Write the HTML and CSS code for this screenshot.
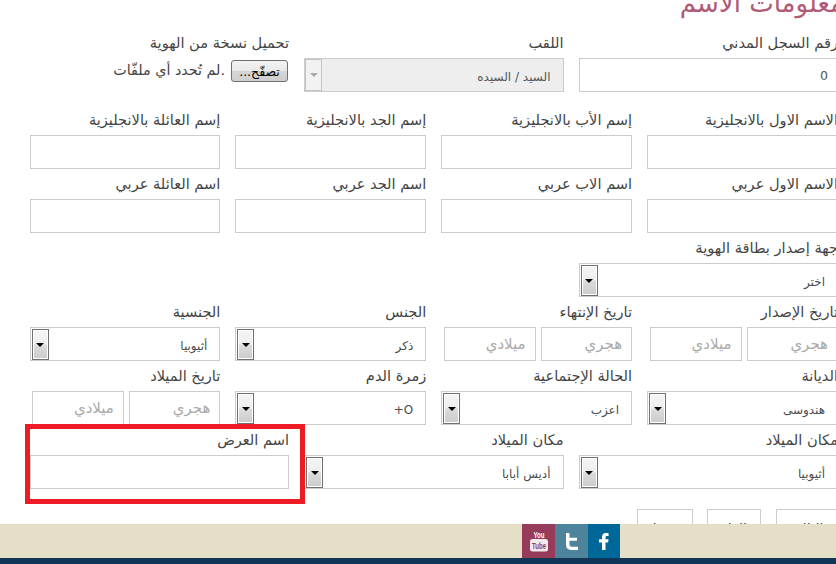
FILE: index.html
```html
<!DOCTYPE html>
<html lang="ar" dir="rtl">
<head>
<meta charset="utf-8">
<title>معلومات الاسم</title>
<link rel="stylesheet" href="styles.css">
</head>
<body>
<main class="page">
  <h1 class="title">معلومات الاسم</h1>
  <div class="row row3 first">
    <div class="field"><label>رقم السجل المدني</label><input class="ctl" type="text" value="0"></div>
    <div class="field"><label>اللقب</label>
      <div class="sel disabled"><span class="val">السيد / السيده</span><span class="btn"><i></i></span></div></div>
    <div class="field"><label>تحميل نسخة من الهوية</label>
      <div class="file"><button class="browse" type="button">تصفّح...</button><span>.لم تُحدد أي ملفّات</span></div></div>
  </div>
  <div class="row row4">
    <div class="field"><label>الاسم الاول بالانجليزية</label><input class="ctl" type="text"></div>
    <div class="field"><label>إسم الأب بالانجليزية</label><input class="ctl" type="text"></div>
    <div class="field"><label>إسم الجد بالانجليزية</label><input class="ctl" type="text"></div>
    <div class="field"><label>إسم العائلة بالانجليزية</label><input class="ctl" type="text"></div>
  </div>
  <div class="row row4">
    <div class="field"><label>الاسم الاول عربي</label><input class="ctl" type="text"></div>
    <div class="field"><label>اسم الاب عربي</label><input class="ctl" type="text"></div>
    <div class="field"><label>اسم الجد عربي</label><input class="ctl" type="text"></div>
    <div class="field"><label>اسم العائلة عربي</label><input class="ctl" type="text"></div>
  </div>
  <div class="row row3">
    <div class="field"><label>جهة إصدار بطاقة الهوية</label>
      <div class="sel"><span class="val">اختر</span><span class="btn"><i></i></span></div></div>
  </div>
  <div class="row row4">
    <div class="field"><label>تاريخ الإصدار</label>
      <div class="dates"><input class="ctl" type="text" placeholder="هجري"><input class="ctl" type="text" placeholder="ميلادي"></div></div>
    <div class="field"><label>تاريخ الإنتهاء</label>
      <div class="dates"><input class="ctl" type="text" placeholder="هجري"><input class="ctl" type="text" placeholder="ميلادي"></div></div>
    <div class="field"><label>الجنس</label>
      <div class="sel"><span class="val">ذكر</span><span class="btn"><i></i></span></div></div>
    <div class="field"><label>الجنسية</label>
      <div class="sel"><span class="val">أثيوبيا</span><span class="btn"><i></i></span></div></div>
  </div>
  <div class="row row4">
    <div class="field"><label>الديانة</label>
      <div class="sel"><span class="val">هندوسى</span><span class="btn"><i></i></span></div></div>
    <div class="field"><label>الحالة الإجتماعية</label>
      <div class="sel"><span class="val">اعزب</span><span class="btn"><i></i></span></div></div>
    <div class="field"><label>زمرة الدم</label>
      <div class="sel"><span class="val">O+</span><span class="btn"><i></i></span></div></div>
    <div class="field"><label>تاريخ الميلاد</label>
      <div class="dates"><input class="ctl" type="text" placeholder="هجري"><input class="ctl" type="text" placeholder="ميلادي"></div></div>
  </div>
  <div class="row row3">
    <div class="field"><label>مكان الميلاد</label>
      <div class="sel"><span class="val">أثيوبيا</span><span class="btn"><i></i></span></div></div>
    <div class="field"><label>مكان الميلاد</label>
      <div class="sel"><span class="val">أديس أبابا</span><span class="btn"><i></i></span></div></div>
    <div class="field"><label>اسم العرض</label><input class="ctl" type="text"></div>
  </div>
  <div class="actions">
    <button class="act act-next" type="button">التالي</button>
    <button class="act act-back" type="button">إلغاء</button>
    <button class="act act-save" type="button">حفظ</button>
  </div>
</main>
<div class="highlight"></div>
<footer class="footer">
  <div class="social">
    <a class="soc fb" href="#" aria-label="Facebook">
      <svg width="10" height="17" viewBox="0 0 10 17"><path fill="#fff" d="M3 17V9.500H0V6.300H3V4C3 1.400 4.500 0 7 0c1.200 0 2.300.1 2.600.2v2.900H8c-1.200 0-1.500.6-1.500 1.500v1.700h3l-.4 3.200H6.500V17z"/></svg>
    </a>
    <a class="soc tw" href="#" aria-label="Twitter">
      <svg width="12" height="17" viewBox="0 0 12 17"><path fill="#fff" d="M0 0h3.500v4.800H11v3H3.500v3.400c0 1.600.7 2.500 2.200 2.500H12V17H5C1.800 17 0 15 0 11.800z"/></svg>
    </a>
    <a class="soc yt" href="#" aria-label="YouTube">
      <svg width="18" height="22" viewBox="0 0 18 22">
        <text class="yt-you" x="9" y="8" text-anchor="middle" textLength="11" lengthAdjust="spacingAndGlyphs">You</text>
        <rect x="0" y="9" width="18" height="12.500" rx="2.500" fill="#f4e9ec"/>
        <text class="yt-tube" x="9" y="19" text-anchor="middle" textLength="14" lengthAdjust="spacingAndGlyphs">Tube</text>
      </svg>
    </a>
  </div>
</footer>
</body>
</html>
```

FILE: styles.css
```css
* { box-sizing: border-box; }
html, body { margin: 0; height: 564px; overflow: hidden; background: #fff; }
body { position: relative; width: 836px; font-family: "DejaVu Sans", sans-serif; color: #444; font-size: 13px; }

.page { width: 808.500px; margin-right: -2px; }

.title {
  margin: -17px -6px 0 0;
  height: 45px;
  font-size: 26px;
  line-height: 40px;
  font-weight: normal;
  color: #b05a75;
  white-space: nowrap;
}

.row { display: grid; column-gap: 15px; }
.row3 { grid-template-columns: repeat(3, 1fr); }
.row4 { grid-template-columns: repeat(4, 1fr); }
.row.first { margin-bottom: 13px; }

.field { min-width: 0; }
.field label {
  display: block;
  height: 30px;
  padding-top: 6px;
  font-size: 14.600px;
  line-height: 18px;
  color: #444;
  white-space: nowrap;
}

.ctl {
  display: block;
  width: 100%;
  height: 34px;
  padding: 0 9px;
  border: 1px solid #ccc;
  border-radius: 0;
  background: #fff;
  font-family: inherit;
  font-size: 12.500px;
  color: #555;
  text-align: right;
  outline: 0;
}
.ctl::placeholder { color: #aaa; font-size: 15px; opacity: 1; }

.dates { display: flex; gap: 5px; }
.dates .ctl { width: 91.500px; flex: none; }

.sel {
  position: relative;
  display: flex;
  align-items: center;
  height: 34px;
  padding: 0 12px;
  border: 1px solid #ccc;
  background: #fff;
  font-size: 12px;
  color: #4c4c4c;
}
.sel .val { padding-top: 3px; }
.sel .btn {
  position: absolute;
  left: 1px;
  top: 1px;
  bottom: 0;
  width: 17px;
  border: 1px solid #707070;
  box-shadow: inset 0 0 0 1px #fff;
  background: linear-gradient(#f5f5f5 0, #eeeeee 48%, #dcdcdc 52%, #cbcbcb 100%);
}
.sel .btn i {
  position: absolute;
  left: 3.500px;
  top: 13px;
  width: 0;
  height: 0;
  border-style: solid;
  border-width: 4px 4px 0;
  border-color: #000 transparent transparent;
}
.sel.disabled { background: #eee; border-color: #ccc; color: #555; }
.sel.disabled .btn { border-color: #c4c4c4; background: #f2f2f2; top: 0; bottom: 0; left: 0; box-shadow: none; }
.sel.disabled .btn i { border-top-color: #aaa; }

.file { display: flex; align-items: flex-start; gap: 6px; padding-top: 2px; font-size: 14.300px; color: #444; }
.file span { padding-top: 2px; white-space: nowrap; }
.browse {
  width: 57px;
  height: 22px;
  margin-right: 1px;
  padding: 0;
  border: 1px solid #707070;
  border-radius: 3px;
  background: linear-gradient(#f3f3f3, #e9e9e9 48%, #d6d6d6 52%, #cfcfcf);
  font-family: inherit;
  font-size: 12.500px;
  color: #000;
}

.actions { display: flex; gap: 15px; margin-top: 20px; }
.act {
  height: 34px;
  padding: 6px 0 0;
  border: 1px solid #ccc;
  background: #fff;
  font-family: inherit;
  font-size: 14px;
  color: #1c3f66;
}
.act-next { width: 62px; }
.act-back { width: 54px; margin-left: -1px; }
.act-save { width: 56px; }

/* annotation drawn over the form */
.highlight {
  position: absolute;
  left: 25px;
  top: 424px;
  width: 280px;
  height: 80px;
  border: 5px solid #ed1c24;
}

.footer {
  position: absolute;
  left: 0;
  right: 0;
  top: 524px;
  height: 40px;
  border-bottom: 6px solid #0f3557;
  background: #e5dfc8;
  display: flex;
  padding-right: 216px;
}
.social { display: flex; }
.soc { display: flex; align-items: center; justify-content: center; width: 33px; height: 34px; }
.fb { width: 32px; background: #006898; }
.tw { background: #4d849b; }
.yt { background: #973b5b; }
.yt-you { font: bold 9px "Liberation Sans", sans-serif; fill: #fff; }
.yt-tube { font: bold 8.500px "Liberation Sans", sans-serif; fill: #973b5b; }
```
